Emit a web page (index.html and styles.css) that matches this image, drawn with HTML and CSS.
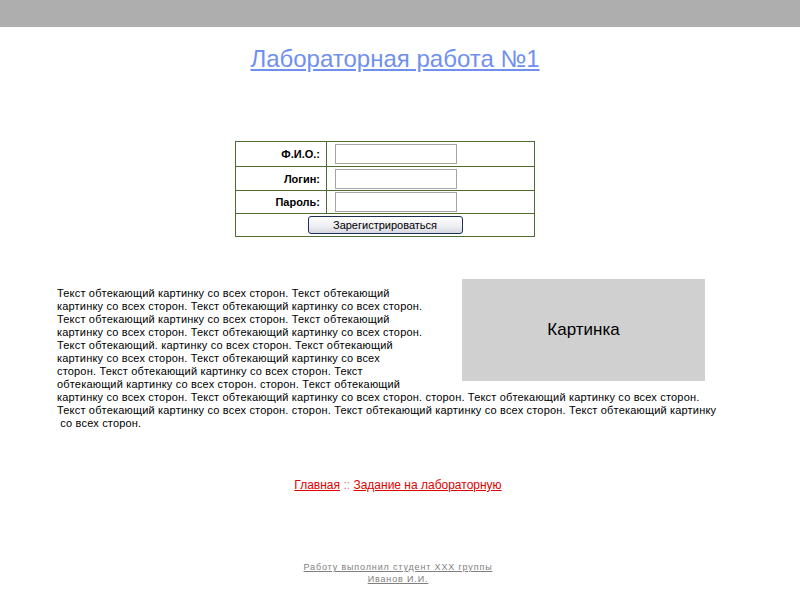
FILE: index.html
```html
<!DOCTYPE html>
<html lang="ru">
<head>
<meta charset="utf-8">
<title>Лабораторная работа №1</title>
<link rel="stylesheet" href="styles.css">
</head>
<body>
<div class="topbar"></div>
<h1 class="title"><a href="#">Лабораторная работа №1</a></h1>
<form class="reg">
<table class="reg-table">
<tr class="r1"><td class="lbl">Ф.И.О.:</td><td class="fld"><input type="text" class="inp"></td></tr>
<tr class="r2"><td class="lbl">Логин:</td><td class="fld"><input type="text" class="inp"></td></tr>
<tr><td class="lbl">Пароль:</td><td class="fld"><input type="password" class="inp"></td></tr>
<tr><td colspan="2" class="btn-cell"><button type="button" class="btn">Зарегистрироваться</button></td></tr>
</table>
</form>
<div class="content">
<div class="picture">Картинка</div>
<p class="wrap-text">Текст обтекающий картинку со всех сторон. Текст обтекающий<br>картинку со всех сторон. Текст обтекающий картинку со всех сторон.<br>Текст обтекающий картинку со всех сторон. Текст обтекающий<br>картинку со всех сторон. Текст обтекающий картинку со всех сторон.<br>Текст обтекающий. картинку со всех сторон. Текст обтекающий<br>картинку со всех сторон. Текст обтекающий картинку со всех<br>сторон. Текст обтекающий картинку со всех сторон. Текст<br>обтекающий картинку со всех сторон. сторон. Текст обтекающий<br>картинку со всех сторон. Текст обтекающий картинку со всех сторон. сторон. Текст обтекающий картинку со всех сторон.<br>Текст обтекающий картинку со всех сторон. сторон. Текст обтекающий картинку со всех сторон. Текст обтекающий картинку<br>&nbsp;со всех сторон.</p>
</div>
<nav class="nav"><a href="#">Главная</a> <span class="sep">::</span> <a href="#">Задание на лабораторную</a></nav>
<footer class="footer"><a href="#">Работу выполнил студент XXX группы<br>Иванов И.И.</a></footer>
</body>
</html>
```
FILE: styles.css
```css
html, body {
  margin: 0;
  padding: 0;
  background: #ffffff;
}
body {
  font-family: "Liberation Sans", Arial, sans-serif;
  color: #000;
}
.topbar {
  height: 27px;
  background: #aeaeae;
}
.title {
  margin: 18px 0 0;
  padding-right: 10px;
  text-align: center;
  font-size: 24px;
  line-height: 28px;
  font-weight: normal;
}
.title a {
  color: #7090f0;
  text-decoration: underline;
}
.reg {
  margin: 68px 0 0;
}
.reg-table {
  border-collapse: collapse;
  width: 300px;
  margin-left: calc(50% - 165px);
  border: 1px solid #4e6b30;
}
.reg-table td {
  border: 1px solid #4e6b30;
  padding: 0;
  height: 22px;
}
.reg-table .r1 td {
  height: 24px;
}
.reg-table .r2 td {
  height: 23px;
}
.lbl {
  width: 84px;
  padding-right: 6px !important;
  text-align: right;
  font-weight: bold;
  font-size: 11px;
}
.fld {
  padding-left: 8px !important;
}
.inp {
  display: block;
  width: 122px;
  height: 20px;
  box-sizing: border-box;
  border: 1px solid #a5a5a5;
  margin: 0;
  padding: 0 2px;
  font-size: 11px;
}
.btn-cell {
  text-align: center;
}
.btn {
  width: 155px;
  height: 18px;
  padding: 0;
  font-family: "Liberation Sans", Arial, sans-serif;
  font-size: 11px;
  border: 1px solid #1c2f58;
  border-radius: 3px;
  background: linear-gradient(#ffffff, #ecedf2 60%, #d6d8e2);
  color: #000;
  vertical-align: middle;
}
.content {
  margin: 50px 0 0 57px;
  width: 680px;
}
.picture {
  float: right;
  width: 243px;
  height: 102px;
  margin: -8px 32px 6px 20px;
  background: #d0d0d0;
  display: flex;
  align-items: center;
  justify-content: center;
  font-size: 17px;
}
.wrap-text {
  margin: 0;
  font-size: 11px;
  line-height: 13px;
  letter-spacing: 0.18px;
}
.nav {
  clear: both;
  margin-top: 48px;
  padding-right: 4px;
  text-align: center;
  font-size: 12px;
  line-height: 14px;
}
.nav a {
  color: #e00000;
  text-decoration: underline;
}
.sep {
  color: #e07070;
}
.footer {
  margin-top: 69px;
  padding-right: 4px;
  text-align: center;
  font-size: 9px;
  line-height: 12px;
  letter-spacing: 0.85px;
}
.footer a {
  color: #808080;
  text-decoration: underline;
}
```
